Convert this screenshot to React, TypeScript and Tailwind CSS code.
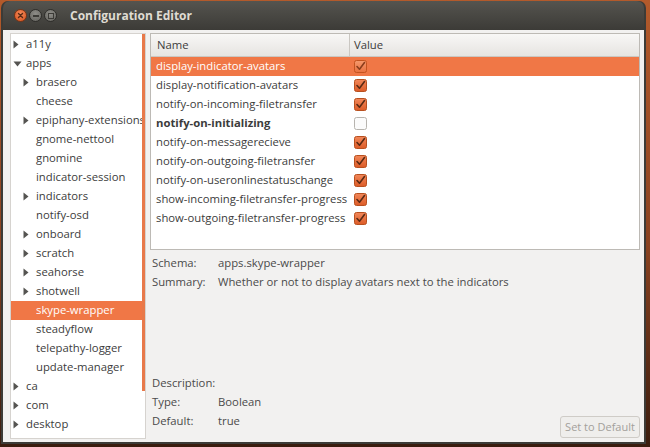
import { type ReactNode } from "react";

type TreeItem = { label: string; level: number; arrow?: "right" | "down"; selected?: boolean };

const tree: TreeItem[] = [
  { label: "a11y", level: 0, arrow: "right" },
  { label: "apps", level: 0, arrow: "down" },
  { label: "brasero", level: 1, arrow: "right" },
  { label: "cheese", level: 1 },
  { label: "epiphany-extensions", level: 1, arrow: "right" },
  { label: "gnome-nettool", level: 1 },
  { label: "gnomine", level: 1 },
  { label: "indicator-session", level: 1 },
  { label: "indicators", level: 1, arrow: "right" },
  { label: "notify-osd", level: 1 },
  { label: "onboard", level: 1, arrow: "right" },
  { label: "scratch", level: 1, arrow: "right" },
  { label: "seahorse", level: 1, arrow: "right" },
  { label: "shotwell", level: 1, arrow: "right" },
  { label: "skype-wrapper", level: 1, selected: true },
  { label: "steadyflow", level: 1 },
  { label: "telepathy-logger", level: 1 },
  { label: "update-manager", level: 1 },
  { label: "ca", level: 0, arrow: "right" },
  { label: "com", level: 0, arrow: "right" },
  { label: "desktop", level: 0, arrow: "right" },
];

const keys = [
  { name: "display-indicator-avatars", checked: true, selected: true },
  { name: "display-notification-avatars", checked: true },
  { name: "notify-on-incoming-filetransfer", checked: true },
  { name: "notify-on-initializing", checked: false, bold: true },
  { name: "notify-on-messagerecieve", checked: true },
  { name: "notify-on-outgoing-filetransfer", checked: true },
  { name: "notify-on-useronlinestatuschange", checked: true },
  { name: "show-incoming-filetransfer-progress", checked: true },
  { name: "show-outgoing-filetransfer-progress", checked: true },
];

function Arrow({ dir }: { dir: "right" | "down" }) {
  return dir === "right" ? (
    <svg width="6" height="9" viewBox="0 0 6 9">
      <path d="M0.5 0.5 L5.5 4.5 L0.5 8.5 Z" fill="#555451" />
    </svg>
  ) : (
    <svg width="9" height="6" viewBox="0 0 9 6">
      <path d="M0.5 0.5 L8.5 0.5 L4.5 5.5 Z" fill="#555451" />
    </svg>
  );
}

function Check({ checked, selected }: { checked: boolean; selected?: boolean }) {
  if (!checked) {
    return (
      <svg width="13" height="13" viewBox="0 0 13 13">
        <rect x="0.5" y="0.5" width="12" height="12" rx="2" fill="#fbfbfb" stroke="#b7b4af" />
      </svg>
    );
  }
  return (
    <svg width="13" height="13" viewBox="0 0 13 13">
      <defs>
        <linearGradient id={selected ? "cbs" : "cb"} x1="0" y1="0" x2="0" y2="1">
          <stop offset="0" stopColor={selected ? "#f59a6e" : "#f2885a"} />
          <stop offset="1" stopColor={selected ? "#e8703f" : "#dc5b27"} />
        </linearGradient>
      </defs>
      <rect x="0.5" y="0.5" width="12" height="12" rx="2" fill={`url(#${selected ? "cbs" : "cb"})`} stroke={selected ? "#c4531f" : "#b8501f"} />
      <path d="M3 6.5 L5.5 9.2 L10.5 2.5" fill="none" stroke={selected ? "#8a3d1c" : "#5a2a14"} strokeWidth="1.6" strokeLinecap="round" strokeLinejoin="round" />
    </svg>
  );
}

function Detail({ label, children }: { label: string; children?: ReactNode }) {
  return (
    <div className="flex h-[19px] items-center">
      <span className="w-[66px] shrink-0">{label}</span>
      <span>{children}</span>
    </div>
  );
}

export default function App() {
  return (
    <div
      className="h-[447px] w-[650px] overflow-hidden bg-[linear-gradient(180deg,#b35a2b_0%,#8a4220_55%,#3a1c0e_100%)] pl-[1px] pt-[1px] text-[11.3px] text-[#3c3c3c]"
      style={{ fontFamily: '"Open Sans", "Noto Sans", sans-serif' }}
    >
      <div className="flex h-[443px] w-[645px] flex-col rounded-t-[7px] bg-[#3c3b37] px-[2px] pb-[2px]">
        {/* title bar */}
        <div className="flex h-[29px] shrink-0 items-center rounded-t-[7px] bg-[linear-gradient(180deg,#55544f,#3c3b37)] pl-[11px]">
          <div className="flex items-center gap-[2px]">
            <div className="grid h-[13px] w-[13px] place-items-center rounded-full border border-[#7a3416] bg-[radial-gradient(circle_at_50%_35%,#f58a5a,#d4501c)]">
              <svg width="7" height="7" viewBox="0 0 7 7">
                <path d="M1.5 1.5 L5.5 5.5 M5.5 1.5 L1.5 5.5" stroke="#5a2a14" strokeWidth="1.4" strokeLinecap="round" />
              </svg>
            </div>
            <div className="grid h-[13px] w-[13px] place-items-center rounded-full border border-[#2e2d2a] bg-[radial-gradient(circle_at_50%_35%,#8e8d88,#62615c)]">
              <div className="h-[2px] w-[6px] bg-[#3c3b37]" />
            </div>
            <div className="grid h-[13px] w-[13px] place-items-center rounded-full border border-[#2e2d2a] bg-[radial-gradient(circle_at_50%_35%,#8e8d88,#62615c)]">
              <div className="h-[6px] w-[6px] border-[1.5px] border-[#3c3b37]" />
            </div>
          </div>
          <span className="ml-[13px] text-[12px] font-bold text-[#dfdbd2]">Configuration Editor</span>
        </div>

        {/* body */}
        <div className="flex min-h-0 flex-1 gap-[4px] bg-[#f2f1f0] pb-[3px] pl-[7px] pr-[4px] pt-[3px]">
          {/* tree */}
          <div className="relative flex w-[136px] flex-col border border-[#d6d3cf] bg-white pt-[1px]">
            {tree.map((t) => (
              <div
                key={t.label}
                className={`flex h-[19px] shrink-0 items-center ${t.selected ? "bg-[#f07746] text-white" : ""}`}
                style={{ paddingLeft: t.level === 0 ? 2 : 12 }}
              >
                <span className="flex w-[13px] items-center">{t.arrow && <Arrow dir={t.arrow} />}</span>
                <span className="whitespace-nowrap">{t.label}</span>
              </div>
            ))}
            <div className="absolute right-0 top-0 h-[357px] w-[3px] bg-[#e8794a]" />
          </div>

          {/* right side */}
          <div className="flex min-w-0 flex-1 flex-col">
            <div className="flex h-[217px] shrink-0 flex-col border border-[#bdbab5] bg-white">
              <div className="flex h-[23px] shrink-0 items-center border-b border-[#cac7c2] bg-[linear-gradient(180deg,#f8f7f6,#e6e4e1)]">
                <span className="w-[199px] border-r border-[#cac7c2] pl-[6px] leading-[22px]">Name</span>
                <span className="pl-[4px]">Value</span>
              </div>
              {keys.map((k) => (
                <div
                  key={k.name}
                  className={`flex h-[19px] shrink-0 items-center ${k.selected ? "bg-[#f07746] text-white" : ""}`}
                >
                  <span className={`w-[203px] whitespace-nowrap pl-[5px] ${k.bold ? "font-bold" : ""}`}>{k.name}</span>
                  <Check checked={k.checked} selected={k.selected} />
                </div>
              ))}
            </div>

            <div className="mt-[4px] pl-[2px] text-[#4a4a4a]">
              <Detail label="Schema:">apps.skype-wrapper</Detail>
              <Detail label="Summary:">Whether or not to display avatars next to the indicators</Detail>
            </div>

            <div className="flex-1" />

            <div className="flex items-end justify-between">
              <div className="mb-[8px] pl-[2px] text-[#4a4a4a]">
                <Detail label="Description:" />
                <Detail label="Type:">Boolean</Detail>
                <Detail label="Default:">true</Detail>
              </div>
              <button className="mb-[1px] h-[22px] w-[80px] rounded-[3px] border border-[#cfccc7] bg-[#efeeec] text-[11px] text-[#a3a09b]">
                Set to Default
              </button>
            </div>
          </div>
        </div>
      </div>
    </div>
  );
}
